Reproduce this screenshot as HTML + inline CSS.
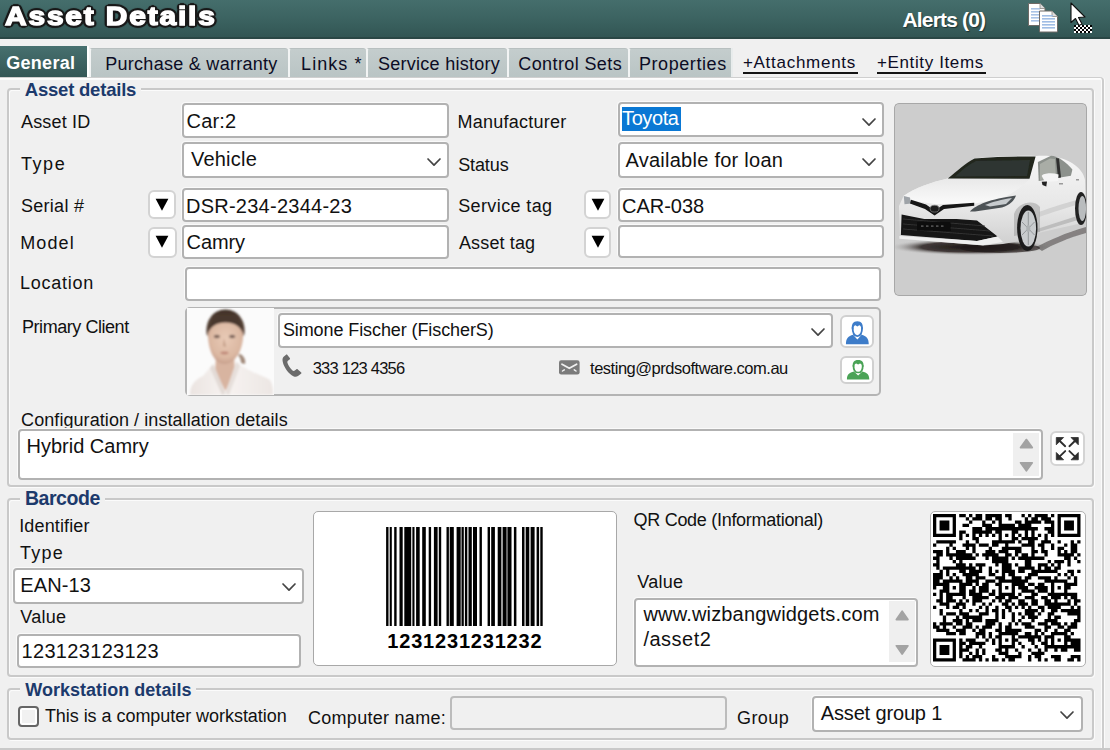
<!DOCTYPE html><html><head><meta charset="utf-8"><style>
html,body{margin:0;padding:0;}
body{width:1110px;height:750px;position:relative;overflow:hidden;background:#f0f0f0;font-family:"Liberation Sans",sans-serif;}
.t{position:absolute;white-space:nowrap;}
.b{position:absolute;}
</style></head><body>
<div class="b" style="left:0px;top:0px;width:1110px;height:39px;background:linear-gradient(#456e6c,#3c6361 50%,#325654);border-bottom:2px solid #2a4745;box-sizing:border-box;"></div>
<div class="t" style="left:5px;top:2.99px;font-size:26px;line-height:26px;font-weight:bold;letter-spacing:1.6px;transform-origin:0 0;transform:scaleX(1.15);color:#fff;-webkit-text-stroke:1.4px #fff;text-shadow:2.60px 0.00px 0.7px #1a1a1a,2.40px 0.99px 0.7px #1a1a1a,1.84px 1.84px 0.7px #1a1a1a,0.99px 2.40px 0.7px #1a1a1a,0.00px 2.60px 0.7px #1a1a1a,-0.99px 2.40px 0.7px #1a1a1a,-1.84px 1.84px 0.7px #1a1a1a,-2.40px 0.99px 0.7px #1a1a1a,-2.60px 0.00px 0.7px #1a1a1a,-2.40px -0.99px 0.7px #1a1a1a,-1.84px -1.84px 0.7px #1a1a1a,-0.99px -2.40px 0.7px #1a1a1a,-0.00px -2.60px 0.7px #1a1a1a,0.99px -2.40px 0.7px #1a1a1a,1.84px -1.84px 0.7px #1a1a1a,2.40px -0.99px 0.7px #1a1a1a">Asset Details</div>
<div class="t" style="left:902.48px;top:8.52px;font-size:21px;line-height:21px;font-weight:bold;color:#fff;letter-spacing:-0.829px;text-shadow:1px 1px 1px rgba(0,0,0,.45);">Alerts (0)</div>
<svg class="b" style="left:1026px;top:2px" width="34" height="32" viewBox="1026 2 34 32">
<g>
<path d="M1028.5 3.5 H1040 L1045 8.5 V25.5 H1028.5 Z" fill="#fff" stroke="#6e6a66" stroke-width="1"/>
<g fill="#a9c3e6"><rect x="1031" y="8" width="9" height="1.6"/><rect x="1031" y="11" width="9" height="1.6"/><rect x="1031" y="14" width="9" height="1.6"/><rect x="1031" y="17" width="9" height="1.6"/><rect x="1031" y="20" width="9" height="1.6"/></g>
<path d="M1039.5 11 H1052 L1057.5 16.5 V32 H1039.5 Z" fill="#fff" stroke="#6e6a66" stroke-width="1"/>
<path d="M1052 11 V16.5 H1057.5" fill="#ddd" stroke="#8a8580" stroke-width="0.8"/>
<path d="M1040 3.5 V8.5 H1045" fill="#ddd" stroke="#8a8580" stroke-width="0.8"/>
<g fill="#a0bde4"><rect x="1042" y="15" width="11" height="1.6"/><rect x="1042" y="18" width="13" height="1.6"/><rect x="1042" y="21" width="13" height="1.6"/><rect x="1042" y="24" width="13" height="1.6"/><rect x="1042" y="27" width="13" height="1.6"/></g>
</g></svg>
<svg class="b" style="left:1066px;top:0px" width="30" height="36" viewBox="1066 0 30 36">
<rect x="1074" y="25" width="2" height="2" fill="#000"/><rect x="1074" y="27" width="2" height="2" fill="#fff"/><rect x="1074" y="29" width="2" height="2" fill="#000"/><rect x="1074" y="31" width="2" height="2" fill="#fff"/><rect x="1076" y="25" width="2" height="2" fill="#fff"/><rect x="1076" y="27" width="2" height="2" fill="#000"/><rect x="1076" y="29" width="2" height="2" fill="#fff"/><rect x="1076" y="31" width="2" height="2" fill="#000"/><rect x="1078" y="25" width="2" height="2" fill="#000"/><rect x="1078" y="27" width="2" height="2" fill="#fff"/><rect x="1078" y="29" width="2" height="2" fill="#000"/><rect x="1078" y="31" width="2" height="2" fill="#fff"/><rect x="1080" y="25" width="2" height="2" fill="#fff"/><rect x="1080" y="27" width="2" height="2" fill="#000"/><rect x="1080" y="29" width="2" height="2" fill="#fff"/><rect x="1080" y="31" width="2" height="2" fill="#000"/><rect x="1082" y="25" width="2" height="2" fill="#000"/><rect x="1082" y="27" width="2" height="2" fill="#fff"/><rect x="1082" y="29" width="2" height="2" fill="#000"/><rect x="1082" y="31" width="2" height="2" fill="#fff"/><rect x="1084" y="25" width="2" height="2" fill="#fff"/><rect x="1084" y="27" width="2" height="2" fill="#000"/><rect x="1084" y="29" width="2" height="2" fill="#fff"/><rect x="1084" y="31" width="2" height="2" fill="#000"/><rect x="1086" y="25" width="2" height="2" fill="#000"/><rect x="1086" y="27" width="2" height="2" fill="#fff"/><rect x="1086" y="29" width="2" height="2" fill="#000"/><rect x="1086" y="31" width="2" height="2" fill="#fff"/><rect x="1088" y="25" width="2" height="2" fill="#fff"/><rect x="1088" y="27" width="2" height="2" fill="#000"/><rect x="1088" y="29" width="2" height="2" fill="#fff"/><rect x="1088" y="31" width="2" height="2" fill="#000"/><rect x="1090" y="25" width="2" height="2" fill="#000"/><rect x="1090" y="27" width="2" height="2" fill="#fff"/><rect x="1090" y="29" width="2" height="2" fill="#000"/><rect x="1090" y="31" width="2" height="2" fill="#fff"/>
<path d="M1071 3 L1071 22.5 L1075.5 18.5 L1079 25.5 L1082 24 L1078.5 17.5 L1085 17 Z" fill="#fff" stroke="#111" stroke-width="1.1" stroke-linejoin="round"/>
</svg>
<div class="b" style="left:0px;top:46px;width:88px;height:32px;background:linear-gradient(#47706f,#335655);"></div>
<div class="b" style="left:87px;top:46px;width:2px;height:32px;background:#fff;"></div>
<div class="t" style="left:6.18px;top:53.66px;font-size:18px;line-height:18px;font-weight:bold;color:#fff;letter-spacing:0.305px;">General</div>
<div class="b" style="left:89px;top:48px;width:199px;height:30px;background:linear-gradient(#c4cdcd,#b9c4c4);border-left:2px solid #f2f4f4;border-top:1px solid #b8c0c0;border-top-left-radius:3px;border-top-right-radius:3px;box-sizing:border-box;"></div>
<div class="t" style="left:105.22px;top:54.96px;font-size:18px;line-height:18px;font-weight:normal;color:#0c0c24;letter-spacing:0.280px;">Purchase &amp; warranty</div>
<div class="b" style="left:288px;top:48px;width:78px;height:30px;background:linear-gradient(#c4cdcd,#b9c4c4);border-left:2px solid #f2f4f4;border-top:1px solid #b8c0c0;border-top-left-radius:3px;border-top-right-radius:3px;box-sizing:border-box;"></div>
<div class="t" style="left:301.12px;top:54.96px;font-size:18px;line-height:18px;font-weight:normal;color:#0c0c24;letter-spacing:1.043px;">Links *</div>
<div class="b" style="left:366px;top:48px;width:141px;height:30px;background:linear-gradient(#c4cdcd,#b9c4c4);border-left:2px solid #f2f4f4;border-top:1px solid #b8c0c0;border-top-left-radius:3px;border-top-right-radius:3px;box-sizing:border-box;"></div>
<div class="t" style="left:377.99px;top:54.96px;font-size:18px;line-height:18px;font-weight:normal;color:#0c0c24;letter-spacing:0.266px;">Service history</div>
<div class="b" style="left:507px;top:48px;width:121px;height:30px;background:linear-gradient(#c4cdcd,#b9c4c4);border-left:2px solid #f2f4f4;border-top:1px solid #b8c0c0;border-top-left-radius:3px;border-top-right-radius:3px;box-sizing:border-box;"></div>
<div class="t" style="left:518.30px;top:54.96px;font-size:18px;line-height:18px;font-weight:normal;color:#0c0c24;letter-spacing:0.390px;">Control Sets</div>
<div class="b" style="left:628px;top:48px;width:105px;height:30px;background:linear-gradient(#c4cdcd,#b9c4c4);border-left:2px solid #f2f4f4;border-top:1px solid #b8c0c0;border-top-left-radius:3px;border-top-right-radius:3px;box-sizing:border-box;"></div>
<div class="t" style="left:638.91px;top:54.96px;font-size:18px;line-height:18px;font-weight:normal;color:#0c0c24;letter-spacing:0.576px;">Properties</div>
<div class="b" style="left:731px;top:48px;width:2px;height:30px;background:#e8ecec;"></div>
<div class="t" style="left:742.89px;top:54.01px;font-size:17px;line-height:17px;font-weight:normal;color:#0c0c24;letter-spacing:0.725px;">+Attachments</div>
<div class="t" style="left:876.99px;top:54.11px;font-size:17px;line-height:17px;font-weight:normal;color:#0c0c24;letter-spacing:0.623px;">+Entity Items</div>
<div class="b" style="left:743px;top:72px;width:115px;height:2px;background:#141414;"></div>
<div class="b" style="left:877px;top:72px;width:109px;height:2px;background:#141414;"></div>
<div class="b" style="left:-2px;top:77px;width:1106px;height:675px;border-top:1px solid #cfcfcf;border-right:2px solid #cdcdcd;border-top-right-radius:4px;box-sizing:border-box;box-shadow:inset 0 1px 0 #fdfdfd,inset 0 2px 0 #fbfbfb,inset -1px 0 0 #fbfbfb,1px 0 0 #fbfbfb;"></div>
<div class="b" style="left:7px;top:88px;width:1087px;height:399px;border:2px solid #c9c9c9;border-radius:4px;box-sizing:border-box;box-shadow:inset 1px 1px 0 #fbfbfb,1px 1px 0 #fbfbfb;"></div>
<div class="b" style="left:20px;top:86px;width:121px;height:7px;background:#f0f0f0;"></div>
<div class="t" style="left:24.74px;top:80.94px;font-size:18.5px;line-height:18.5px;font-weight:bold;color:#1c3a6c;letter-spacing:-0.208px;">Asset details</div>
<div class="t" style="left:20.95px;top:113.36px;font-size:18px;line-height:18px;font-weight:normal;color:#111;letter-spacing:0.194px;">Asset ID</div>
<div class="t" style="left:20.89px;top:155.16px;font-size:18px;line-height:18px;font-weight:normal;color:#111;letter-spacing:1.618px;">Type</div>
<div class="t" style="left:20.89px;top:197.16px;font-size:18px;line-height:18px;font-weight:normal;color:#111;letter-spacing:0.305px;">Serial #</div>
<div class="t" style="left:20.21px;top:234.36px;font-size:18px;line-height:18px;font-weight:normal;color:#111;letter-spacing:1.112px;">Model</div>
<div class="t" style="left:20.02px;top:273.96px;font-size:18px;line-height:18px;font-weight:normal;color:#111;letter-spacing:0.724px;">Location</div>
<div class="t" style="left:22.02px;top:318.16px;font-size:18px;line-height:18px;font-weight:normal;color:#111;letter-spacing:-0.452px;">Primary Client</div>
<div class="t" style="left:457.51px;top:113.06px;font-size:18px;line-height:18px;font-weight:normal;color:#111;letter-spacing:0.245px;">Manufacturer</div>
<div class="t" style="left:458.19px;top:155.66px;font-size:18px;line-height:18px;font-weight:normal;color:#111;letter-spacing:-0.118px;">Status</div>
<div class="t" style="left:458.19px;top:196.66px;font-size:18px;line-height:18px;font-weight:normal;color:#111;letter-spacing:0.389px;">Service tag</div>
<div class="t" style="left:458.95px;top:234.26px;font-size:18px;line-height:18px;font-weight:normal;color:#111;letter-spacing:0.144px;">Asset tag</div>
<div class="b" style="left:182px;top:103px;width:267px;height:35px;background:#fff;border:2px solid #b2b2b2;border-radius:4px;box-sizing:border-box;box-shadow:-0.5px -0.5px 0 0.5px #fafafa;"></div>
<div class="t" style="left:186.60px;top:110.67px;font-size:20px;line-height:20px;font-weight:normal;color:#111;letter-spacing:0.125px;">Car:2</div>
<div class="b" style="left:182px;top:142px;width:267px;height:36px;background:#fff;border:2px solid #b2b2b2;border-radius:4px;box-sizing:border-box;box-shadow:-0.5px -0.5px 0 0.5px #fafafa;"></div>
<div class="t" style="left:190.90px;top:149.47px;font-size:20px;line-height:20px;font-weight:normal;color:#111;letter-spacing:0.250px;">Vehicle</div>
<svg class="b" style="left:425.9px;top:157.3px" width="16" height="10.2"><polyline points="2,2 8.0,8.2 14,2" fill="none" stroke="#444" stroke-width="1.7" stroke-linecap="round" stroke-linejoin="round"/></svg>
<div class="b" style="left:147.6px;top:190.2px;width:28.900000000000006px;height:28.900000000000006px;background:#fff;border:2px solid #d3d3d3;border-radius:6px;box-sizing:border-box;"></div>
<svg class="b" style="left:155.1px;top:198.4px" width="14" height="14"><polygon points="0.6,0.8 13.4,0.8 7,12.8" fill="#000"/></svg>
<div class="b" style="left:182px;top:188px;width:267px;height:34px;background:#fff;border:2px solid #b2b2b2;border-radius:4px;box-sizing:border-box;box-shadow:-0.5px -0.5px 0 0.5px #fafafa;"></div>
<div class="t" style="left:185.95px;top:195.67px;font-size:20px;line-height:20px;font-weight:normal;color:#111;letter-spacing:0.257px;">DSR-234-2344-23</div>
<div class="b" style="left:148px;top:226.5px;width:28.5px;height:31.69999999999999px;background:#fff;border:2px solid #d3d3d3;border-radius:6px;box-sizing:border-box;"></div>
<svg class="b" style="left:155.2px;top:234.7px" width="14" height="14"><polygon points="0.6,0.8 13.4,0.8 7,12.8" fill="#000"/></svg>
<div class="b" style="left:182px;top:225px;width:267px;height:34px;background:#fff;border:2px solid #b2b2b2;border-radius:4px;box-sizing:border-box;box-shadow:-0.5px -0.5px 0 0.5px #fafafa;"></div>
<div class="t" style="left:186.60px;top:231.57px;font-size:20px;line-height:20px;font-weight:normal;color:#111;letter-spacing:-0.112px;">Camry</div>
<div class="b" style="left:618px;top:102px;width:266px;height:35px;background:#fff;border:2px solid #b2b2b2;border-radius:4px;box-sizing:border-box;box-shadow:-0.5px -0.5px 0 0.5px #fafafa;"></div>
<div class="b" style="left:622px;top:107px;width:59px;height:24px;background:#0a78d4;"></div>
<div class="t" style="left:622.05px;top:108.27px;font-size:20px;line-height:20px;font-weight:normal;color:#fff;letter-spacing:-0.400px;">Toyota</div>
<svg class="b" style="left:860.9px;top:117.3px" width="16" height="10.2"><polyline points="2,2 8.0,8.2 14,2" fill="none" stroke="#444" stroke-width="1.7" stroke-linecap="round" stroke-linejoin="round"/></svg>
<div class="b" style="left:618px;top:142px;width:266px;height:36px;background:#fff;border:2px solid #b2b2b2;border-radius:4px;box-sizing:border-box;box-shadow:-0.5px -0.5px 0 0.5px #fafafa;"></div>
<div class="t" style="left:625.45px;top:149.77px;font-size:20px;line-height:20px;font-weight:normal;color:#111;letter-spacing:0.262px;">Available for loan</div>
<svg class="b" style="left:860.9px;top:157.3px" width="16" height="10.2"><polyline points="2,2 8.0,8.2 14,2" fill="none" stroke="#444" stroke-width="1.7" stroke-linecap="round" stroke-linejoin="round"/></svg>
<div class="b" style="left:584px;top:190px;width:27px;height:29px;background:#fff;border:2px solid #d3d3d3;border-radius:6px;box-sizing:border-box;"></div>
<svg class="b" style="left:590.5px;top:198.2px" width="14" height="14"><polygon points="0.6,0.8 13.4,0.8 7,12.8" fill="#000"/></svg>
<div class="b" style="left:618px;top:188px;width:266px;height:34px;background:#fff;border:2px solid #b2b2b2;border-radius:4px;box-sizing:border-box;box-shadow:-0.5px -0.5px 0 0.5px #fafafa;"></div>
<div class="t" style="left:622.10px;top:195.67px;font-size:20px;line-height:20px;font-weight:normal;color:#111;letter-spacing:-0.033px;">CAR-038</div>
<div class="b" style="left:584px;top:226.5px;width:27px;height:31.69999999999999px;background:#fff;border:2px solid #d3d3d3;border-radius:6px;box-sizing:border-box;"></div>
<svg class="b" style="left:590.5px;top:234.7px" width="14" height="14"><polygon points="0.6,0.8 13.4,0.8 7,12.8" fill="#000"/></svg>
<div class="b" style="left:618px;top:225px;width:266px;height:33px;background:#fff;border:2px solid #b2b2b2;border-radius:4px;box-sizing:border-box;box-shadow:-0.5px -0.5px 0 0.5px #fafafa;"></div>
<svg class="b" style="left:895px;top:104px" width="191" height="191" viewBox="895 104 191 191">
<defs>
<filter id="cb" x="-5%" y="-5%" width="110%" height="110%"><feGaussianBlur stdDeviation="0.5"/></filter>
<linearGradient id="side" x1="0" y1="0" x2="0" y2="1"><stop offset="0" stop-color="#f6f6f6"/><stop offset="0.6" stop-color="#e6e6e6"/><stop offset="1" stop-color="#cfcfcf"/></linearGradient>
<linearGradient id="hood" x1="0" y1="0" x2="0" y2="1"><stop offset="0" stop-color="#e9e9e9"/><stop offset="1" stop-color="#fafafa"/></linearGradient>
<radialGradient id="shad" cx="0.5" cy="0.5" r="0.5"><stop offset="0" stop-color="#1a1412" stop-opacity="1"/><stop offset="0.6" stop-color="#2a2220" stop-opacity="0.85"/><stop offset="1" stop-color="#cdcdcd" stop-opacity="0"/></radialGradient>
</defs>
<rect x="895" y="104" width="191" height="191" fill="#cdcdcd"/>
<g filter="url(#cb)">
<ellipse cx="970" cy="247" rx="82" ry="8.5" fill="url(#shad)"/><ellipse cx="1000" cy="248" rx="40" ry="5" fill="#1a1412" opacity="0.6"/>
<path d="M1036 247 C1050 240 1065 233 1086 227 L1086 233 C1068 238 1052 245 1042 251 Z" fill="#2a2624" opacity="0.45"/>
<!-- main body silhouette -->
<path d="M974 158.5 C990 156.5 1020 155.5 1036 156 C1050 155 1062 157 1072 163 C1080 168 1084 174 1085 180 L1086 220 L1078 224 L1038 233 L1020 241 L1003 244 L983 245.5 L900 238.5 L899 206 L903.5 196 C915 188 932 182 947.8 178.6 Z" fill="url(#side)"/>
<!-- hood -->
<path d="M903.5 196 C915 188 932 182 947.8 178.6 L1029.5 179 C1022 187 1012 194 1000 199 L975 203.5 L935 204 L911 200.6 Z" fill="url(#hood)"/>
<!-- windshield -->
<path d="M947.8 178.6 C958 170 966 163 974.5 158.5 C995 156.8 1020 156.3 1035.6 156.5 L1029.5 178.7 Z" fill="#20261f"/>
<path d="M955 176.5 C962 170 968 165 976 161 L1030 160 L1027 176 Z" fill="#333b34" opacity="0.8"/>
<!-- side windows -->
<path d="M1037.9 161.9 L1051 155.7 C1058 156 1066 162 1072.4 169.5 L1070.9 175.7 L1038.7 181 Z" fill="#8c918c"/>
<path d="M1040 164 L1050 158.5 L1055 159 L1056 178.5 L1040 180 Z" fill="#a9ada6"/>
<path d="M1056 158 L1059 158.5 L1061 177.5 L1058 178 Z" fill="#2d2f2d"/>
<!-- mirror -->
<path d="M1041.7 176 C1043 173 1052 172.5 1058.6 174.5 L1058 181 L1045 182 Z" fill="#f5f5f5"/>
<path d="M1041.7 181.8 L1047 181.5 L1046.3 186.4 L1042.5 185 Z" fill="#222"/>
<!-- side shading line -->
<path d="M1038.7 212 C1050 208 1070 201 1083 198.7 L1084 203 C1070 206 1052 213 1039 217 Z" fill="#d2d2d2"/>
<path d="M1037 229 L1077 216 L1078 220 L1038 232 Z" fill="#bdbdbd"/>
<!-- door handles -->
<rect x="1059" y="183" width="4" height="1.5" fill="#9a9a9a"/>
<rect x="1076" y="179" width="3" height="1.5" fill="#9a9a9a"/>
<!-- front wheel -->
<path d="M1014 214 C1018 202 1034 199 1040 207 L1040 232 L1014 236 Z" fill="#9a9a9a" opacity="0.5"/>
<ellipse cx="1027.3" cy="228" rx="10.2" ry="23" fill="#1c1c1c"/>
<ellipse cx="1028.3" cy="228.6" rx="7.8" ry="18" fill="#c9ccce"/>
<g stroke="#8d9194" stroke-width="0.9"><line x1="1028.3" y1="212" x2="1028.3" y2="245"/><line x1="1022" y1="222" x2="1034.5" y2="235"/><line x1="1034.5" y1="222" x2="1022" y2="235"/></g>
<ellipse cx="1028.3" cy="228.6" rx="2" ry="3.5" fill="#aeb2b4"/>
<!-- rear wheel -->
<ellipse cx="1081" cy="208.5" rx="6" ry="16.5" fill="#232323"/>
<ellipse cx="1082.3" cy="208.5" rx="3.8" ry="12.5" fill="#b9bcbe"/>
<!-- left headlight -->
<path d="M903.8 196 L910 197.5 L911.1 203.5 L904.5 204.3 Z" fill="#9ea3a8"/>
<!-- upper grille V line + logo -->
<path d="M911 199.8 L926 204.5 L934.6 210.5 L943 205 L974.2 202.8 L974.2 205.8 L944 209 L934.6 215.5 L925 209 L910 203.5 Z" fill="#141414"/>
<ellipse cx="934.6" cy="208.7" rx="4.5" ry="3.4" fill="#1b1b1b" stroke="#7a7a7a" stroke-width="0.8"/>
<!-- right headlight -->
<path d="M969.8 211.6 C976 205 990 199 1016 195.6 C1014 201 1010 205 1002 207.5 L975 211.5 Z" fill="#4e5357"/>
<path d="M985 205 C992 202 1002 199.5 1012 198 L1006 204 L990 206.5 Z" fill="#c7cbce"/>
<!-- lower grille -->
<path d="M901.6 214.5 L924.3 218.9 L956.6 218.9 L977 220.4 L997.6 236.5 L977 240.9 L900.9 235 Z" fill="#151515"/>
<g stroke="#3a3a3a" stroke-width="0.8"><line x1="903" y1="219" x2="985" y2="226"/><line x1="903" y1="224" x2="990" y2="231"/><line x1="903" y1="229" x2="993" y2="236"/></g>
<rect x="917" y="221.8" width="33.7" height="8.8" fill="#0e0e0e"/>
<g fill="#6a6a6a"><rect x="921" y="225.5" width="2.5" height="1.2"/><rect x="926" y="225.5" width="2.5" height="1.2"/><rect x="931" y="225.5" width="2.5" height="1.2"/><rect x="936" y="225.5" width="2.5" height="1.2"/><rect x="941" y="225.5" width="2.5" height="1.2"/></g>
<!-- bumper lip -->
<path d="M899.4 236 L977 241 L997.6 236.5 L1003 242 L983 245.3 L899.4 238.8 Z" fill="#efefef"/>
</g>
</svg>
<div class="b" style="left:894px;top:103px;width:193px;height:193px;border:1.5px solid #a8a8a8;border-radius:5px;box-sizing:border-box;"></div>
<div class="b" style="left:185px;top:267px;width:696px;height:34px;background:#fff;border:2px solid #b2b2b2;border-radius:4px;box-sizing:border-box;box-shadow:-0.5px -0.5px 0 0.5px #fafafa;"></div>
<div class="b" style="left:185px;top:307px;width:696px;height:89px;background:#f0f0f0;border:2px solid #b4b4b4;border-radius:5px;box-sizing:border-box;"></div>
<svg class="b" style="left:187px;top:308px" width="87" height="87" viewBox="187 308 87 87">
<defs>
<filter id="pb" x="-10%" y="-10%" width="120%" height="120%"><feGaussianBlur stdDeviation="0.9"/></filter>
<radialGradient id="face" cx="0.5" cy="0.42" r="0.62"><stop offset="0" stop-color="#e8cab6"/><stop offset="0.7" stop-color="#dcb8a2"/><stop offset="1" stop-color="#c29a88"/></radialGradient>
<linearGradient id="shirt" x1="0" y1="0" x2="1" y2="0"><stop offset="0" stop-color="#ebe4e1"/><stop offset="0.45" stop-color="#f7f3f1"/><stop offset="1" stop-color="#ece6e3"/></linearGradient>
<linearGradient id="hair" x1="0" y1="0" x2="0" y2="1"><stop offset="0" stop-color="#3f2f26"/><stop offset="1" stop-color="#6b5547"/></linearGradient>
</defs>
<rect x="187" y="308" width="87" height="87" fill="#fbfbfb"/>
<g filter="url(#pb)">
<path d="M240 354 C244 356 246 360 245 364 L241 363 C241 360 240 357 238 355 Z" fill="#a08878"/>
<path d="M216 356 L234 356 L235 372 L225.5 391 L215 372 Z" fill="#d8b4a0"/>
<path d="M190 395 C190 386 194 380 203 376 L213.2 363.9 L225.5 393.3 L236.5 361.4 C248 372 262 375 270 380 C273 385 273 390 273 395 Z" fill="url(#shirt)"/>
<path d="M225.5 393.3 L213.2 363.9 L210 368 L222 395 Z" fill="#e2dad6"/>
<path d="M225.5 393.3 L236.5 361.4 L240 366 L229 395 Z" fill="#e6dfdb"/>
<path d="M206.5 334 C205 321 213 309.5 225.5 309.5 C238 309.5 246 321 244.5 334 L242 338 L209 338 Z" fill="url(#hair)"/>
<path d="M208 332 C207.5 351 215 364 224.5 364 C234 364 244 351 243 332 C242.5 324 235 320.5 225.5 320.5 C216 320.5 208.5 324 208 332 Z" fill="url(#face)"/>
<path d="M207.5 334 C208 322 215 315 225.5 315 C236 315 243 322 243.5 334 C240 326 234 322.5 225.5 322.5 C217 322.5 211 326 207.5 334 Z" fill="#4a382d"/>
<ellipse cx="216.9" cy="336.5" rx="3" ry="1.7" fill="#7a6258"/>
<ellipse cx="232.2" cy="336.5" rx="3" ry="1.7" fill="#7a6258"/>
<path d="M224 338 L223 346 L226 347 Z" fill="#c49e88"/>
<ellipse cx="224.5" cy="353" rx="4" ry="1.4" fill="#c08878"/>
</g>
</svg>
<div class="b" style="left:278px;top:313px;width:555px;height:35px;background:#fff;border:2px solid #b2b2b2;border-radius:4px;box-sizing:border-box;box-shadow:-0.5px -0.5px 0 0.5px #fafafa;"></div>
<div class="t" style="left:282.89px;top:320.96px;font-size:18px;line-height:18px;font-weight:normal;color:#111;letter-spacing:-0.093px;">Simone Fischer (FischerS)</div>
<svg class="b" style="left:810.4px;top:326.8px" width="16" height="10.2"><polyline points="2,2 8.0,8.2 14,2" fill="none" stroke="#444" stroke-width="1.7" stroke-linecap="round" stroke-linejoin="round"/></svg>
<svg class="b" style="left:281px;top:354px" width="22" height="24" viewBox="0 0 22 24">
<path d="M3.2 2.2 C2 3 1.2 4.5 1.6 7 C2.4 12 6 18 11 21.5 C13.5 23.2 15.5 23 17 22 L20 19.8 C20.6 19.3 20.5 18.6 20 18.2 L16.8 15.4 C16.3 15 15.7 15 15.2 15.4 L13.8 16.6 C12.8 17.2 11.8 16.8 11 16 C8.8 13.8 7.3 11.3 6.5 9 C6.2 8 6.4 7.2 7.2 6.6 L8.6 5.5 C9.1 5.1 9.2 4.5 8.8 4 L6.4 1 C6 0.5 5.3 0.5 4.8 0.9 Z" fill="#6b6b6b"/>
</svg>
<svg class="b" style="left:558px;top:359px" width="23" height="17" viewBox="0 0 23 17">
<rect x="1" y="1.2" width="20.6" height="14.2" rx="2.2" fill="#7b7b7b"/>
<polyline points="4,5.2 11.3,9.2 18.6,5.2" fill="none" stroke="#f0f0f0" stroke-width="1.8" stroke-linecap="round"/>
<line x1="4.5" y1="12" x2="6.3" y2="10.8" stroke="#f0f0f0" stroke-width="1.5" stroke-linecap="round"/>
<line x1="18" y1="12" x2="16.3" y2="10.8" stroke="#f0f0f0" stroke-width="1.5" stroke-linecap="round"/>
</svg>
<div class="t" style="left:312.68px;top:359.93px;font-size:16.5px;line-height:16.5px;font-weight:normal;color:#111;letter-spacing:-0.765px;">333 123 4356</div>
<div class="t" style="left:590.05px;top:359.93px;font-size:16.5px;line-height:16.5px;font-weight:normal;color:#111;letter-spacing:-0.481px;">testing@prdsoftware.com.au</div>
<div class="b" style="left:840px;top:315px;width:34px;height:33px;background:#fff;border:2px solid #d0d0d0;border-radius:6px;box-sizing:border-box;"></div>
<div class="b" style="left:840px;top:356px;width:34px;height:28px;background:#fff;border:2px solid #d0d0d0;border-radius:6px;box-sizing:border-box;"></div>
<svg class="b" style="left:845.2px;top:319.6px" width="24.8" height="25.4" viewBox="-1 -1 26.11 26.05" preserveAspectRatio="none">
<path d="M0 24 C0 17.5 2.5 15.8 7.5 14.2 L12 19 L16.5 14.2 C21.5 15.8 24 17.5 24 24 Z" fill="#3d7cc9"/>
<path d="M7 6.5 C7 12 9 15.5 12 15.5 C15 15.5 17 12 17 6.5" fill="#fff" stroke="#3d7cc9" stroke-width="1.9"/>
<path d="M6.2 8.5 C5.8 3 7.5 0.2 12 0.2 C16.5 0.2 18.2 3 17.8 8.5 L16.2 8.5 C16 5.5 15 4.8 14 4.5 L12 5.6 L10 4.5 C9 4.8 8 5.5 7.8 8.5 Z" fill="#3d7cc9"/>
</svg>
<svg class="b" style="left:845.7px;top:359.0px" width="24.4" height="21.7" viewBox="-1 -1 26.14 26.44" preserveAspectRatio="none">
<path d="M0 24 C0 17.5 2.5 15.8 7.5 14.2 L12 19 L16.5 14.2 C21.5 15.8 24 17.5 24 24 Z" fill="#4aa356"/>
<path d="M7 6.5 C7 12 9 15.5 12 15.5 C15 15.5 17 12 17 6.5" fill="#fff" stroke="#4aa356" stroke-width="1.9"/>
<path d="M6.2 8.5 C5.8 3 7.5 0.2 12 0.2 C16.5 0.2 18.2 3 17.8 8.5 L16.2 8.5 C16 5.5 15 4.8 14 4.5 L12 5.6 L10 4.5 C9 4.8 8 5.5 7.8 8.5 Z" fill="#4aa356"/>
</svg>
<div class="t" style="left:21.10px;top:411.36px;font-size:18px;line-height:18px;font-weight:normal;color:#111;letter-spacing:0.068px;">Configuration / installation details</div>
<div class="b" style="left:18px;top:429px;width:1025px;height:51px;background:#fff;border:2px solid #b2b2b2;border-radius:4px;box-sizing:border-box;box-shadow:-0.5px -0.5px 0 0.5px #fafafa;"></div>
<div class="t" style="left:26.45px;top:436.47px;font-size:20px;line-height:20px;font-weight:normal;color:#111;letter-spacing:0.005px;">Hybrid Camry</div>
<div class="b" style="left:1013.4px;top:433px;width:25.199999999999932px;height:43px;background:#efefef;"></div>
<svg class="b" style="left:1005px;top:425px" width="45" height="60" viewBox="1005 425 45 60"><g fill="#a3a3a3" stroke="#a3a3a3" stroke-width="1.8" stroke-linejoin="round"><polygon points="1026.4,439.6 1032.2,447.6 1020.6,447.6"/><polygon points="1020.6,462.8 1032.2,462.8 1026.4,470.8"/></g></svg>
<div class="b" style="left:1050px;top:431px;width:35px;height:35px;background:#fff;border:2px solid #d4d4d4;border-radius:6px;box-sizing:border-box;"></div>
<svg class="b" style="left:1050px;top:431px" width="35" height="35" viewBox="1050 431 35 35">
<g fill="#2e2e2e" stroke="#2e2e2e" stroke-linejoin="round" stroke-width="0.8">
<polygon points="1056.3,437.5 1063.6,437.5 1056.3,444.8"/>
<polygon points="1078.3,437.5 1071,437.5 1078.3,444.8"/>
<polygon points="1056.3,459.8 1063.6,459.8 1056.3,452.5"/>
<polygon points="1078.3,459.8 1071,459.8 1078.3,452.5"/>
</g>
<g stroke="#2e2e2e" stroke-width="1.9" stroke-linecap="round">
<line x1="1059" y1="440.2" x2="1065.2" y2="446.2"/>
<line x1="1075.6" y1="440.2" x2="1069.4" y2="446.2"/>
<line x1="1059" y1="457.1" x2="1065.2" y2="451.1"/>
<line x1="1075.6" y1="457.1" x2="1069.4" y2="451.1"/>
</g></svg>
<div class="b" style="left:7px;top:498px;width:1087px;height:179px;border:2px solid #c9c9c9;border-radius:4px;box-sizing:border-box;box-shadow:inset 1px 1px 0 #fbfbfb,1px 1px 0 #fbfbfb;"></div>
<div class="b" style="left:20px;top:495px;width:85px;height:7px;background:#f0f0f0;"></div>
<div class="t" style="left:24.88px;top:489.09px;font-size:19.5px;line-height:19.5px;font-weight:bold;color:#1c3a6c;letter-spacing:-0.442px;">Barcode</div>
<div class="t" style="left:19.23px;top:517.26px;font-size:18px;line-height:18px;font-weight:normal;color:#111;letter-spacing:0.134px;">Identifier</div>
<div class="t" style="left:19.99px;top:544.46px;font-size:18px;line-height:18px;font-weight:normal;color:#111;letter-spacing:1.252px;">Type</div>
<div class="b" style="left:13px;top:568px;width:291px;height:36px;background:#fff;border:2px solid #b2b2b2;border-radius:4px;box-sizing:border-box;box-shadow:-0.5px -0.5px 0 0.5px #fafafa;"></div>
<div class="t" style="left:20.35px;top:574.67px;font-size:20px;line-height:20px;font-weight:normal;color:#111;letter-spacing:0.100px;">EAN-13</div>
<svg class="b" style="left:281.1px;top:582.3px" width="16" height="10.2"><polyline points="2,2 8.0,8.2 14,2" fill="none" stroke="#444" stroke-width="1.7" stroke-linecap="round" stroke-linejoin="round"/></svg>
<div class="t" style="left:20.31px;top:608.46px;font-size:18px;line-height:18px;font-weight:normal;color:#111;letter-spacing:0.243px;">Value</div>
<div class="b" style="left:17px;top:634px;width:284px;height:34px;background:#fff;border:2px solid #b2b2b2;border-radius:4px;box-sizing:border-box;box-shadow:-0.5px -0.5px 0 0.5px #fafafa;"></div>
<div class="t" style="left:21.50px;top:640.77px;font-size:20px;line-height:20px;font-weight:normal;color:#111;letter-spacing:0.327px;">123123123123</div>
<div class="b" style="left:313px;top:511px;width:304px;height:155px;background:#fff;border:1.5px solid #a8a8a8;border-radius:5px;box-sizing:border-box;"></div>
<svg class="b" style="left:380px;top:527px" width="170" height="100"><rect x="6.1" y="0" width="2.4" height="99" fill="#000"/><rect x="9.7" y="0" width="2.1" height="99" fill="#000"/><rect x="14.2" y="0" width="2.4" height="99" fill="#000"/><rect x="19.5" y="0" width="3.2" height="99" fill="#000"/><rect x="24.3" y="0" width="6.9" height="99" fill="#000"/><rect x="32.4" y="0" width="2.1" height="99" fill="#000"/><rect x="36.1" y="0" width="3.6" height="99" fill="#000"/><rect x="42.2" y="0" width="3.6" height="99" fill="#000"/><rect x="48.7" y="0" width="2.4" height="99" fill="#000"/><rect x="53.9" y="0" width="3.7" height="99" fill="#000"/><rect x="58.8" y="0" width="2.4" height="99" fill="#000"/><rect x="66.5" y="0" width="2.4" height="99" fill="#000"/><rect x="69.7" y="0" width="4.1" height="99" fill="#000"/><rect x="76.6" y="0" width="4.1" height="99" fill="#000"/><rect x="81.5" y="0" width="2.3" height="99" fill="#000"/><rect x="84.9" y="0" width="2.4" height="99" fill="#000"/><rect x="88.5" y="0" width="3.3" height="99" fill="#000"/><rect x="93.0" y="0" width="4.0" height="99" fill="#000"/><rect x="99.5" y="0" width="2.4" height="99" fill="#000"/><rect x="107.6" y="0" width="2.4" height="99" fill="#000"/><rect x="111.2" y="0" width="3.7" height="99" fill="#000"/><rect x="117.7" y="0" width="3.7" height="99" fill="#000"/><rect x="122.6" y="0" width="4.0" height="99" fill="#000"/><rect x="127.4" y="0" width="4.1" height="99" fill="#000"/><rect x="133.9" y="0" width="2.5" height="99" fill="#000"/><rect x="142.0" y="0" width="2.5" height="99" fill="#000"/><rect x="145.7" y="0" width="3.6" height="99" fill="#000"/><rect x="150.6" y="0" width="4.0" height="99" fill="#000"/><rect x="156.6" y="0" width="2.5" height="99" fill="#000"/><rect x="160.3" y="0" width="2.4" height="99" fill="#000"/></svg>
<div class="t" style="left:387.35px;top:630.77px;font-size:20px;line-height:20px;font-weight:bold;color:#000;letter-spacing:0.800px;">1231231231232</div>
<div class="t" style="left:633.54px;top:510.66px;font-size:18px;line-height:18px;font-weight:normal;color:#111;letter-spacing:-0.288px;">QR Code (Informational)</div>
<div class="t" style="left:637.21px;top:573.36px;font-size:18px;line-height:18px;font-weight:normal;color:#111;letter-spacing:0.293px;">Value</div>
<div class="b" style="left:634px;top:598px;width:284px;height:68.5px;background:#fff;border:2px solid #b2b2b2;border-radius:4px;box-sizing:border-box;box-shadow:-0.5px -0.5px 0 0.5px #fafafa;"></div>
<div class="b" style="left:889px;top:601.2px;width:26.200000000000045px;height:61.299999999999955px;background:#efefef;"></div>
<div class="t" style="left:643.45px;top:604.37px;font-size:20px;line-height:20px;font-weight:normal;color:#111;letter-spacing:0.174px;">www.wizbangwidgets.com</div>
<div class="t" style="left:643.40px;top:629.17px;font-size:20px;line-height:20px;font-weight:normal;color:#111;letter-spacing:0.492px;">/asset2</div>
<svg class="b" style="left:880px;top:600px" width="40" height="65" viewBox="880 600 40 65"><g fill="#a3a3a3" stroke="#a3a3a3" stroke-width="1.8" stroke-linejoin="round"><polygon points="902.15,611.3 907.9,619.5 896.4,619.5"/><polygon points="896.4,645.8 907.9,645.8 902.15,654"/></g></svg>
<div class="b" style="left:930px;top:511px;width:156px;height:156px;background:#fff;border:1.5px solid #b0b0b0;border-radius:5px;box-sizing:border-box;"></div>
<svg class="b" style="left:933px;top:514px" width="148" height="148"><path d="M0.00 0.00h22.94v3.28h-22.94zM26.22 0.00h6.56v3.28h-6.56zM36.06 0.00h3.28v3.28h-3.28zM42.61 0.00h6.56v3.28h-6.56zM52.44 0.00h16.39v3.28h-16.39zM72.11 0.00h6.56v3.28h-6.56zM88.50 0.00h3.28v3.28h-3.28zM95.06 0.00h3.28v3.28h-3.28zM101.61 0.00h13.11v3.28h-13.11zM118.00 0.00h3.28v3.28h-3.28zM124.56 0.00h22.94v3.28h-22.94zM0.00 3.28h3.28v3.28h-3.28zM19.67 3.28h3.28v3.28h-3.28zM32.78 3.28h3.28v3.28h-3.28zM39.33 3.28h9.83v3.28h-9.83zM52.44 3.28h6.56v3.28h-6.56zM62.28 3.28h6.56v3.28h-6.56zM75.39 3.28h3.28v3.28h-3.28zM91.78 3.28h3.28v3.28h-3.28zM98.33 3.28h6.56v3.28h-6.56zM108.17 3.28h9.83v3.28h-9.83zM124.56 3.28h3.28v3.28h-3.28zM144.22 3.28h3.28v3.28h-3.28zM0.00 6.56h3.28v3.28h-3.28zM6.56 6.56h9.83v3.28h-9.83zM19.67 6.56h3.28v3.28h-3.28zM36.06 6.56h3.28v3.28h-3.28zM49.17 6.56h3.28v3.28h-3.28zM59.00 6.56h3.28v3.28h-3.28zM65.56 6.56h3.28v3.28h-3.28zM81.94 6.56h6.56v3.28h-6.56zM91.78 6.56h16.39v3.28h-16.39zM111.44 6.56h9.83v3.28h-9.83zM124.56 6.56h3.28v3.28h-3.28zM131.11 6.56h9.83v3.28h-9.83zM144.22 6.56h3.28v3.28h-3.28zM0.00 9.83h3.28v3.28h-3.28zM6.56 9.83h9.83v3.28h-9.83zM19.67 9.83h3.28v3.28h-3.28zM29.50 9.83h6.56v3.28h-6.56zM49.17 9.83h9.83v3.28h-9.83zM65.56 9.83h16.39v3.28h-16.39zM85.22 9.83h13.11v3.28h-13.11zM118.00 9.83h3.28v3.28h-3.28zM124.56 9.83h3.28v3.28h-3.28zM131.11 9.83h9.83v3.28h-9.83zM144.22 9.83h3.28v3.28h-3.28zM0.00 13.11h3.28v3.28h-3.28zM6.56 13.11h9.83v3.28h-9.83zM19.67 13.11h3.28v3.28h-3.28zM39.33 13.11h9.83v3.28h-9.83zM52.44 13.11h52.44v3.28h-52.44zM111.44 13.11h9.83v3.28h-9.83zM124.56 13.11h3.28v3.28h-3.28zM131.11 13.11h9.83v3.28h-9.83zM144.22 13.11h3.28v3.28h-3.28zM0.00 16.39h3.28v3.28h-3.28zM19.67 16.39h3.28v3.28h-3.28zM26.22 16.39h6.56v3.28h-6.56zM39.33 16.39h19.67v3.28h-19.67zM62.28 16.39h6.56v3.28h-6.56zM78.67 16.39h6.56v3.28h-6.56zM91.78 16.39h3.28v3.28h-3.28zM98.33 16.39h3.28v3.28h-3.28zM114.72 16.39h6.56v3.28h-6.56zM124.56 16.39h3.28v3.28h-3.28zM144.22 16.39h3.28v3.28h-3.28zM0.00 19.67h22.94v3.28h-22.94zM26.22 19.67h3.28v3.28h-3.28zM32.78 19.67h3.28v3.28h-3.28zM39.33 19.67h3.28v3.28h-3.28zM45.89 19.67h3.28v3.28h-3.28zM52.44 19.67h3.28v3.28h-3.28zM59.00 19.67h3.28v3.28h-3.28zM65.56 19.67h3.28v3.28h-3.28zM72.11 19.67h3.28v3.28h-3.28zM78.67 19.67h3.28v3.28h-3.28zM85.22 19.67h3.28v3.28h-3.28zM91.78 19.67h3.28v3.28h-3.28zM98.33 19.67h3.28v3.28h-3.28zM104.89 19.67h3.28v3.28h-3.28zM111.44 19.67h3.28v3.28h-3.28zM118.00 19.67h3.28v3.28h-3.28zM124.56 19.67h22.94v3.28h-22.94zM26.22 22.94h3.28v3.28h-3.28zM39.33 22.94h6.56v3.28h-6.56zM65.56 22.94h3.28v3.28h-3.28zM78.67 22.94h6.56v3.28h-6.56zM88.50 22.94h16.39v3.28h-16.39zM111.44 22.94h3.28v3.28h-3.28zM3.28 26.22h19.67v3.28h-19.67zM32.78 26.22h3.28v3.28h-3.28zM42.61 26.22h3.28v3.28h-3.28zM59.00 26.22h22.94v3.28h-22.94zM85.22 26.22h3.28v3.28h-3.28zM95.06 26.22h6.56v3.28h-6.56zM108.17 26.22h9.83v3.28h-9.83zM124.56 26.22h3.28v3.28h-3.28zM137.67 26.22h3.28v3.28h-3.28zM144.22 26.22h3.28v3.28h-3.28zM0.00 29.50h3.28v3.28h-3.28zM16.39 29.50h3.28v3.28h-3.28zM29.50 29.50h13.11v3.28h-13.11zM45.89 29.50h9.83v3.28h-9.83zM59.00 29.50h6.56v3.28h-6.56zM72.11 29.50h3.28v3.28h-3.28zM88.50 29.50h13.11v3.28h-13.11zM104.89 29.50h6.56v3.28h-6.56zM118.00 29.50h3.28v3.28h-3.28zM131.11 29.50h3.28v3.28h-3.28zM137.67 29.50h6.56v3.28h-6.56zM13.11 32.78h3.28v3.28h-3.28zM19.67 32.78h3.28v3.28h-3.28zM32.78 32.78h3.28v3.28h-3.28zM39.33 32.78h3.28v3.28h-3.28zM55.72 32.78h3.28v3.28h-3.28zM68.83 32.78h19.67v3.28h-19.67zM98.33 32.78h3.28v3.28h-3.28zM108.17 32.78h3.28v3.28h-3.28zM118.00 32.78h3.28v3.28h-3.28zM124.56 32.78h6.56v3.28h-6.56zM137.67 32.78h6.56v3.28h-6.56zM0.00 36.06h9.83v3.28h-9.83zM13.11 36.06h3.28v3.28h-3.28zM22.94 36.06h9.83v3.28h-9.83zM39.33 36.06h3.28v3.28h-3.28zM52.44 36.06h9.83v3.28h-9.83zM65.56 36.06h9.83v3.28h-9.83zM81.94 36.06h6.56v3.28h-6.56zM98.33 36.06h6.56v3.28h-6.56zM108.17 36.06h6.56v3.28h-6.56zM124.56 36.06h3.28v3.28h-3.28zM131.11 36.06h3.28v3.28h-3.28zM137.67 36.06h6.56v3.28h-6.56zM3.28 39.33h6.56v3.28h-6.56zM13.11 39.33h26.22v3.28h-26.22zM42.61 39.33h3.28v3.28h-3.28zM49.17 39.33h16.39v3.28h-16.39zM72.11 39.33h6.56v3.28h-6.56zM81.94 39.33h3.28v3.28h-3.28zM88.50 39.33h6.56v3.28h-6.56zM98.33 39.33h3.28v3.28h-3.28zM111.44 39.33h3.28v3.28h-3.28zM124.56 39.33h16.39v3.28h-16.39zM144.22 39.33h3.28v3.28h-3.28zM0.00 42.61h6.56v3.28h-6.56zM16.39 42.61h3.28v3.28h-3.28zM22.94 42.61h19.67v3.28h-19.67zM52.44 42.61h3.28v3.28h-3.28zM59.00 42.61h16.39v3.28h-16.39zM78.67 42.61h3.28v3.28h-3.28zM85.22 42.61h26.22v3.28h-26.22zM131.11 42.61h6.56v3.28h-6.56zM140.94 42.61h3.28v3.28h-3.28zM3.28 45.89h3.28v3.28h-3.28zM19.67 45.89h3.28v3.28h-3.28zM26.22 45.89h3.28v3.28h-3.28zM59.00 45.89h16.39v3.28h-16.39zM91.78 45.89h6.56v3.28h-6.56zM114.72 45.89h3.28v3.28h-3.28zM121.28 45.89h9.83v3.28h-9.83zM134.39 45.89h3.28v3.28h-3.28zM144.22 45.89h3.28v3.28h-3.28zM0.00 49.17h6.56v3.28h-6.56zM22.94 49.17h9.83v3.28h-9.83zM36.06 49.17h3.28v3.28h-3.28zM42.61 49.17h9.83v3.28h-9.83zM62.28 49.17h3.28v3.28h-3.28zM68.83 49.17h9.83v3.28h-9.83zM81.94 49.17h3.28v3.28h-3.28zM91.78 49.17h6.56v3.28h-6.56zM104.89 49.17h9.83v3.28h-9.83zM118.00 49.17h3.28v3.28h-3.28zM124.56 49.17h3.28v3.28h-3.28zM134.39 49.17h3.28v3.28h-3.28zM3.28 52.44h3.28v3.28h-3.28zM9.83 52.44h32.78v3.28h-32.78zM45.89 52.44h3.28v3.28h-3.28zM55.72 52.44h3.28v3.28h-3.28zM68.83 52.44h9.83v3.28h-9.83zM85.22 52.44h16.39v3.28h-16.39zM104.89 52.44h3.28v3.28h-3.28zM111.44 52.44h6.56v3.28h-6.56zM121.28 52.44h6.56v3.28h-6.56zM6.56 55.72h3.28v3.28h-3.28zM13.11 55.72h3.28v3.28h-3.28zM26.22 55.72h6.56v3.28h-6.56zM36.06 55.72h13.11v3.28h-13.11zM55.72 55.72h3.28v3.28h-3.28zM62.28 55.72h3.28v3.28h-3.28zM68.83 55.72h13.11v3.28h-13.11zM85.22 55.72h6.56v3.28h-6.56zM98.33 55.72h26.22v3.28h-26.22zM134.39 55.72h6.56v3.28h-6.56zM144.22 55.72h3.28v3.28h-3.28zM0.00 59.00h9.83v3.28h-9.83zM13.11 59.00h3.28v3.28h-3.28zM19.67 59.00h3.28v3.28h-3.28zM29.50 59.00h16.39v3.28h-16.39zM55.72 59.00h6.56v3.28h-6.56zM68.83 59.00h3.28v3.28h-3.28zM75.39 59.00h6.56v3.28h-6.56zM95.06 59.00h9.83v3.28h-9.83zM124.56 59.00h3.28v3.28h-3.28zM131.11 59.00h3.28v3.28h-3.28zM137.67 59.00h3.28v3.28h-3.28zM0.00 62.28h9.83v3.28h-9.83zM16.39 62.28h3.28v3.28h-3.28zM22.94 62.28h3.28v3.28h-3.28zM32.78 62.28h6.56v3.28h-6.56zM42.61 62.28h9.83v3.28h-9.83zM62.28 62.28h9.83v3.28h-9.83zM78.67 62.28h9.83v3.28h-9.83zM91.78 62.28h6.56v3.28h-6.56zM104.89 62.28h13.11v3.28h-13.11zM121.28 62.28h3.28v3.28h-3.28zM134.39 62.28h3.28v3.28h-3.28zM140.94 62.28h3.28v3.28h-3.28zM0.00 65.56h6.56v3.28h-6.56zM9.83 65.56h19.67v3.28h-19.67zM32.78 65.56h13.11v3.28h-13.11zM52.44 65.56h9.83v3.28h-9.83zM65.56 65.56h29.50v3.28h-29.50zM111.44 65.56h22.94v3.28h-22.94zM140.94 65.56h3.28v3.28h-3.28zM0.00 68.83h16.39v3.28h-16.39zM26.22 68.83h13.11v3.28h-13.11zM42.61 68.83h3.28v3.28h-3.28zM49.17 68.83h6.56v3.28h-6.56zM62.28 68.83h6.56v3.28h-6.56zM78.67 68.83h13.11v3.28h-13.11zM95.06 68.83h6.56v3.28h-6.56zM104.89 68.83h6.56v3.28h-6.56zM118.00 68.83h3.28v3.28h-3.28zM131.11 68.83h13.11v3.28h-13.11zM0.00 72.11h3.28v3.28h-3.28zM9.83 72.11h6.56v3.28h-6.56zM19.67 72.11h3.28v3.28h-3.28zM26.22 72.11h6.56v3.28h-6.56zM39.33 72.11h3.28v3.28h-3.28zM45.89 72.11h9.83v3.28h-9.83zM65.56 72.11h3.28v3.28h-3.28zM72.11 72.11h3.28v3.28h-3.28zM78.67 72.11h3.28v3.28h-3.28zM85.22 72.11h9.83v3.28h-9.83zM101.61 72.11h13.11v3.28h-13.11zM118.00 72.11h3.28v3.28h-3.28zM124.56 72.11h3.28v3.28h-3.28zM131.11 72.11h6.56v3.28h-6.56zM6.56 75.39h9.83v3.28h-9.83zM26.22 75.39h6.56v3.28h-6.56zM36.06 75.39h6.56v3.28h-6.56zM45.89 75.39h9.83v3.28h-9.83zM59.00 75.39h3.28v3.28h-3.28zM65.56 75.39h3.28v3.28h-3.28zM78.67 75.39h3.28v3.28h-3.28zM88.50 75.39h13.11v3.28h-13.11zM104.89 75.39h9.83v3.28h-9.83zM118.00 75.39h3.28v3.28h-3.28zM131.11 75.39h3.28v3.28h-3.28zM0.00 78.67h3.28v3.28h-3.28zM6.56 78.67h3.28v3.28h-3.28zM13.11 78.67h19.67v3.28h-19.67zM36.06 78.67h13.11v3.28h-13.11zM55.72 78.67h6.56v3.28h-6.56zM65.56 78.67h16.39v3.28h-16.39zM85.22 78.67h3.28v3.28h-3.28zM98.33 78.67h6.56v3.28h-6.56zM114.72 78.67h29.50v3.28h-29.50zM6.56 81.94h3.28v3.28h-3.28zM13.11 81.94h6.56v3.28h-6.56zM29.50 81.94h3.28v3.28h-3.28zM39.33 81.94h16.39v3.28h-16.39zM62.28 81.94h9.83v3.28h-9.83zM75.39 81.94h9.83v3.28h-9.83zM91.78 81.94h9.83v3.28h-9.83zM108.17 81.94h6.56v3.28h-6.56zM118.00 81.94h9.83v3.28h-9.83zM131.11 81.94h3.28v3.28h-3.28zM137.67 81.94h6.56v3.28h-6.56zM3.28 85.22h6.56v3.28h-6.56zM13.11 85.22h9.83v3.28h-9.83zM26.22 85.22h3.28v3.28h-3.28zM32.78 85.22h3.28v3.28h-3.28zM39.33 85.22h9.83v3.28h-9.83zM59.00 85.22h3.28v3.28h-3.28zM65.56 85.22h3.28v3.28h-3.28zM72.11 85.22h6.56v3.28h-6.56zM85.22 85.22h6.56v3.28h-6.56zM98.33 85.22h6.56v3.28h-6.56zM111.44 85.22h6.56v3.28h-6.56zM121.28 85.22h3.28v3.28h-3.28zM134.39 85.22h3.28v3.28h-3.28zM140.94 85.22h6.56v3.28h-6.56zM6.56 88.50h9.83v3.28h-9.83zM22.94 88.50h9.83v3.28h-9.83zM39.33 88.50h3.28v3.28h-3.28zM49.17 88.50h3.28v3.28h-3.28zM55.72 88.50h3.28v3.28h-3.28zM68.83 88.50h6.56v3.28h-6.56zM78.67 88.50h3.28v3.28h-3.28zM85.22 88.50h9.83v3.28h-9.83zM98.33 88.50h6.56v3.28h-6.56zM111.44 88.50h26.22v3.28h-26.22zM140.94 88.50h3.28v3.28h-3.28zM0.00 91.78h3.28v3.28h-3.28zM13.11 91.78h3.28v3.28h-3.28zM19.67 91.78h6.56v3.28h-6.56zM29.50 91.78h3.28v3.28h-3.28zM45.89 91.78h3.28v3.28h-3.28zM52.44 91.78h3.28v3.28h-3.28zM62.28 91.78h3.28v3.28h-3.28zM72.11 91.78h6.56v3.28h-6.56zM81.94 91.78h3.28v3.28h-3.28zM88.50 91.78h3.28v3.28h-3.28zM95.06 91.78h3.28v3.28h-3.28zM104.89 91.78h6.56v3.28h-6.56zM114.72 91.78h13.11v3.28h-13.11zM137.67 91.78h3.28v3.28h-3.28zM144.22 91.78h3.28v3.28h-3.28zM6.56 95.06h3.28v3.28h-3.28zM26.22 95.06h3.28v3.28h-3.28zM36.06 95.06h3.28v3.28h-3.28zM42.61 95.06h3.28v3.28h-3.28zM52.44 95.06h3.28v3.28h-3.28zM59.00 95.06h6.56v3.28h-6.56zM68.83 95.06h3.28v3.28h-3.28zM75.39 95.06h3.28v3.28h-3.28zM91.78 95.06h13.11v3.28h-13.11zM108.17 95.06h3.28v3.28h-3.28zM118.00 95.06h6.56v3.28h-6.56zM127.83 95.06h19.67v3.28h-19.67zM6.56 98.33h3.28v3.28h-3.28zM13.11 98.33h9.83v3.28h-9.83zM26.22 98.33h9.83v3.28h-9.83zM45.89 98.33h9.83v3.28h-9.83zM62.28 98.33h3.28v3.28h-3.28zM68.83 98.33h3.28v3.28h-3.28zM78.67 98.33h3.28v3.28h-3.28zM85.22 98.33h3.28v3.28h-3.28zM91.78 98.33h9.83v3.28h-9.83zM104.89 98.33h3.28v3.28h-3.28zM114.72 98.33h6.56v3.28h-6.56zM134.39 98.33h13.11v3.28h-13.11zM9.83 101.61h3.28v3.28h-3.28zM22.94 101.61h3.28v3.28h-3.28zM29.50 101.61h19.67v3.28h-19.67zM62.28 101.61h3.28v3.28h-3.28zM68.83 101.61h3.28v3.28h-3.28zM78.67 101.61h3.28v3.28h-3.28zM88.50 101.61h3.28v3.28h-3.28zM95.06 101.61h9.83v3.28h-9.83zM114.72 101.61h3.28v3.28h-3.28zM121.28 101.61h6.56v3.28h-6.56zM144.22 101.61h3.28v3.28h-3.28zM9.83 104.89h3.28v3.28h-3.28zM19.67 104.89h9.83v3.28h-9.83zM32.78 104.89h3.28v3.28h-3.28zM39.33 104.89h9.83v3.28h-9.83zM52.44 104.89h13.11v3.28h-13.11zM78.67 104.89h3.28v3.28h-3.28zM85.22 104.89h3.28v3.28h-3.28zM98.33 104.89h3.28v3.28h-3.28zM111.44 104.89h13.11v3.28h-13.11zM140.94 104.89h6.56v3.28h-6.56zM0.00 108.17h3.28v3.28h-3.28zM6.56 108.17h13.11v3.28h-13.11zM22.94 108.17h6.56v3.28h-6.56zM32.78 108.17h6.56v3.28h-6.56zM52.44 108.17h9.83v3.28h-9.83zM65.56 108.17h3.28v3.28h-3.28zM75.39 108.17h3.28v3.28h-3.28zM81.94 108.17h3.28v3.28h-3.28zM88.50 108.17h9.83v3.28h-9.83zM104.89 108.17h9.83v3.28h-9.83zM118.00 108.17h9.83v3.28h-9.83zM131.11 108.17h3.28v3.28h-3.28zM137.67 108.17h6.56v3.28h-6.56zM0.00 111.44h6.56v3.28h-6.56zM9.83 111.44h3.28v3.28h-3.28zM19.67 111.44h3.28v3.28h-3.28zM29.50 111.44h9.83v3.28h-9.83zM42.61 111.44h3.28v3.28h-3.28zM49.17 111.44h9.83v3.28h-9.83zM65.56 111.44h3.28v3.28h-3.28zM72.11 111.44h6.56v3.28h-6.56zM91.78 111.44h9.83v3.28h-9.83zM111.44 111.44h6.56v3.28h-6.56zM124.56 111.44h6.56v3.28h-6.56zM134.39 111.44h9.83v3.28h-9.83zM3.28 114.72h13.11v3.28h-13.11zM22.94 114.72h9.83v3.28h-9.83zM39.33 114.72h3.28v3.28h-3.28zM45.89 114.72h6.56v3.28h-6.56zM62.28 114.72h6.56v3.28h-6.56zM72.11 114.72h16.39v3.28h-16.39zM101.61 114.72h6.56v3.28h-6.56zM111.44 114.72h3.28v3.28h-3.28zM121.28 114.72h3.28v3.28h-3.28zM131.11 114.72h6.56v3.28h-6.56zM13.11 118.00h9.83v3.28h-9.83zM26.22 118.00h6.56v3.28h-6.56zM42.61 118.00h9.83v3.28h-9.83zM55.72 118.00h3.28v3.28h-3.28zM65.56 118.00h19.67v3.28h-19.67zM91.78 118.00h6.56v3.28h-6.56zM101.61 118.00h3.28v3.28h-3.28zM108.17 118.00h3.28v3.28h-3.28zM118.00 118.00h16.39v3.28h-16.39zM137.67 118.00h3.28v3.28h-3.28zM42.61 121.28h3.28v3.28h-3.28zM49.17 121.28h3.28v3.28h-3.28zM55.72 121.28h3.28v3.28h-3.28zM62.28 121.28h6.56v3.28h-6.56zM78.67 121.28h3.28v3.28h-3.28zM85.22 121.28h22.94v3.28h-22.94zM111.44 121.28h9.83v3.28h-9.83zM131.11 121.28h6.56v3.28h-6.56zM0.00 124.56h22.94v3.28h-22.94zM26.22 124.56h3.28v3.28h-3.28zM32.78 124.56h9.83v3.28h-9.83zM52.44 124.56h3.28v3.28h-3.28zM59.00 124.56h3.28v3.28h-3.28zM65.56 124.56h3.28v3.28h-3.28zM72.11 124.56h3.28v3.28h-3.28zM78.67 124.56h6.56v3.28h-6.56zM95.06 124.56h6.56v3.28h-6.56zM104.89 124.56h3.28v3.28h-3.28zM111.44 124.56h3.28v3.28h-3.28zM118.00 124.56h3.28v3.28h-3.28zM124.56 124.56h3.28v3.28h-3.28zM131.11 124.56h16.39v3.28h-16.39zM0.00 127.83h3.28v3.28h-3.28zM19.67 127.83h3.28v3.28h-3.28zM26.22 127.83h6.56v3.28h-6.56zM36.06 127.83h16.39v3.28h-16.39zM59.00 127.83h3.28v3.28h-3.28zM65.56 127.83h3.28v3.28h-3.28zM78.67 127.83h3.28v3.28h-3.28zM85.22 127.83h3.28v3.28h-3.28zM98.33 127.83h3.28v3.28h-3.28zM108.17 127.83h6.56v3.28h-6.56zM118.00 127.83h3.28v3.28h-3.28zM131.11 127.83h3.28v3.28h-3.28zM137.67 127.83h9.83v3.28h-9.83zM0.00 131.11h3.28v3.28h-3.28zM6.56 131.11h9.83v3.28h-9.83zM19.67 131.11h3.28v3.28h-3.28zM26.22 131.11h3.28v3.28h-3.28zM32.78 131.11h6.56v3.28h-6.56zM45.89 131.11h3.28v3.28h-3.28zM65.56 131.11h16.39v3.28h-16.39zM88.50 131.11h3.28v3.28h-3.28zM101.61 131.11h3.28v3.28h-3.28zM111.44 131.11h36.06v3.28h-36.06zM0.00 134.39h3.28v3.28h-3.28zM6.56 134.39h9.83v3.28h-9.83zM19.67 134.39h3.28v3.28h-3.28zM26.22 134.39h9.83v3.28h-9.83zM42.61 134.39h3.28v3.28h-3.28zM49.17 134.39h3.28v3.28h-3.28zM62.28 134.39h6.56v3.28h-6.56zM72.11 134.39h3.28v3.28h-3.28zM81.94 134.39h3.28v3.28h-3.28zM95.06 134.39h3.28v3.28h-3.28zM104.89 134.39h3.28v3.28h-3.28zM111.44 134.39h3.28v3.28h-3.28zM121.28 134.39h3.28v3.28h-3.28zM127.83 134.39h6.56v3.28h-6.56zM140.94 134.39h6.56v3.28h-6.56zM0.00 137.67h3.28v3.28h-3.28zM6.56 137.67h9.83v3.28h-9.83zM19.67 137.67h3.28v3.28h-3.28zM26.22 137.67h3.28v3.28h-3.28zM36.06 137.67h3.28v3.28h-3.28zM42.61 137.67h3.28v3.28h-3.28zM49.17 137.67h3.28v3.28h-3.28zM65.56 137.67h9.83v3.28h-9.83zM85.22 137.67h3.28v3.28h-3.28zM98.33 137.67h13.11v3.28h-13.11zM0.00 140.94h3.28v3.28h-3.28zM19.67 140.94h3.28v3.28h-3.28zM26.22 140.94h3.28v3.28h-3.28zM32.78 140.94h3.28v3.28h-3.28zM39.33 140.94h9.83v3.28h-9.83zM59.00 140.94h3.28v3.28h-3.28zM72.11 140.94h16.39v3.28h-16.39zM95.06 140.94h3.28v3.28h-3.28zM101.61 140.94h6.56v3.28h-6.56zM118.00 140.94h9.83v3.28h-9.83zM137.67 140.94h9.83v3.28h-9.83zM0.00 144.22h22.94v3.28h-22.94zM29.50 144.22h13.11v3.28h-13.11zM45.89 144.22h3.28v3.28h-3.28zM52.44 144.22h3.28v3.28h-3.28zM59.00 144.22h6.56v3.28h-6.56zM68.83 144.22h3.28v3.28h-3.28zM75.39 144.22h6.56v3.28h-6.56zM95.06 144.22h3.28v3.28h-3.28zM104.89 144.22h3.28v3.28h-3.28zM111.44 144.22h3.28v3.28h-3.28zM121.28 144.22h6.56v3.28h-6.56zM134.39 144.22h6.56v3.28h-6.56zM144.22 144.22h3.28v3.28h-3.28z" fill="#000"/></svg>
<div class="b" style="left:7px;top:688px;width:1087px;height:52px;border:2px solid #c9c9c9;border-radius:4px;box-sizing:border-box;box-shadow:inset 1px 1px 0 #fbfbfb,1px 1px 0 #fbfbfb;"></div>
<div class="b" style="left:20px;top:686px;width:176px;height:7px;background:#f0f0f0;"></div>
<div class="t" style="left:25.20px;top:680.76px;font-size:18px;line-height:18px;font-weight:bold;color:#1c3a6c;letter-spacing:0.035px;">Workstation details</div>
<div class="b" style="left:18px;top:706px;width:21px;height:21px;background:#f1f1f1;border:2px solid #666;border-radius:4px;box-sizing:border-box;box-shadow:inset 0 0 0 2px #fff;"></div>
<div class="t" style="left:44.89px;top:707.36px;font-size:18px;line-height:18px;font-weight:normal;color:#111;letter-spacing:-0.043px;">This is a computer workstation</div>
<div class="t" style="left:308.00px;top:709.06px;font-size:18px;line-height:18px;font-weight:normal;color:#111;letter-spacing:0.282px;">Computer name:</div>
<div class="b" style="left:450px;top:696px;width:277px;height:34px;background:#f0f0f0;border:2px solid #bcbcbc;border-radius:4px;box-sizing:border-box;"></div>
<div class="t" style="left:737.00px;top:708.86px;font-size:18px;line-height:18px;font-weight:normal;color:#111;letter-spacing:0.431px;">Group</div>
<div class="b" style="left:812px;top:696px;width:270.5px;height:36px;background:#fff;border:2px solid #b2b2b2;border-radius:4px;box-sizing:border-box;box-shadow:-0.5px -0.5px 0 0.5px #fafafa;"></div>
<div class="t" style="left:820.75px;top:703.07px;font-size:20px;line-height:20px;font-weight:normal;color:#111;letter-spacing:-0.150px;">Asset group 1</div>
<svg class="b" style="left:1059.1px;top:710.3px" width="16" height="10.2"><polyline points="2,2 8.0,8.2 14,2" fill="none" stroke="#444" stroke-width="1.7" stroke-linecap="round" stroke-linejoin="round"/></svg>
<div class="b" style="left:0px;top:748px;width:1110px;height:2px;background:#c9c9c9;"></div>
</body></html>
